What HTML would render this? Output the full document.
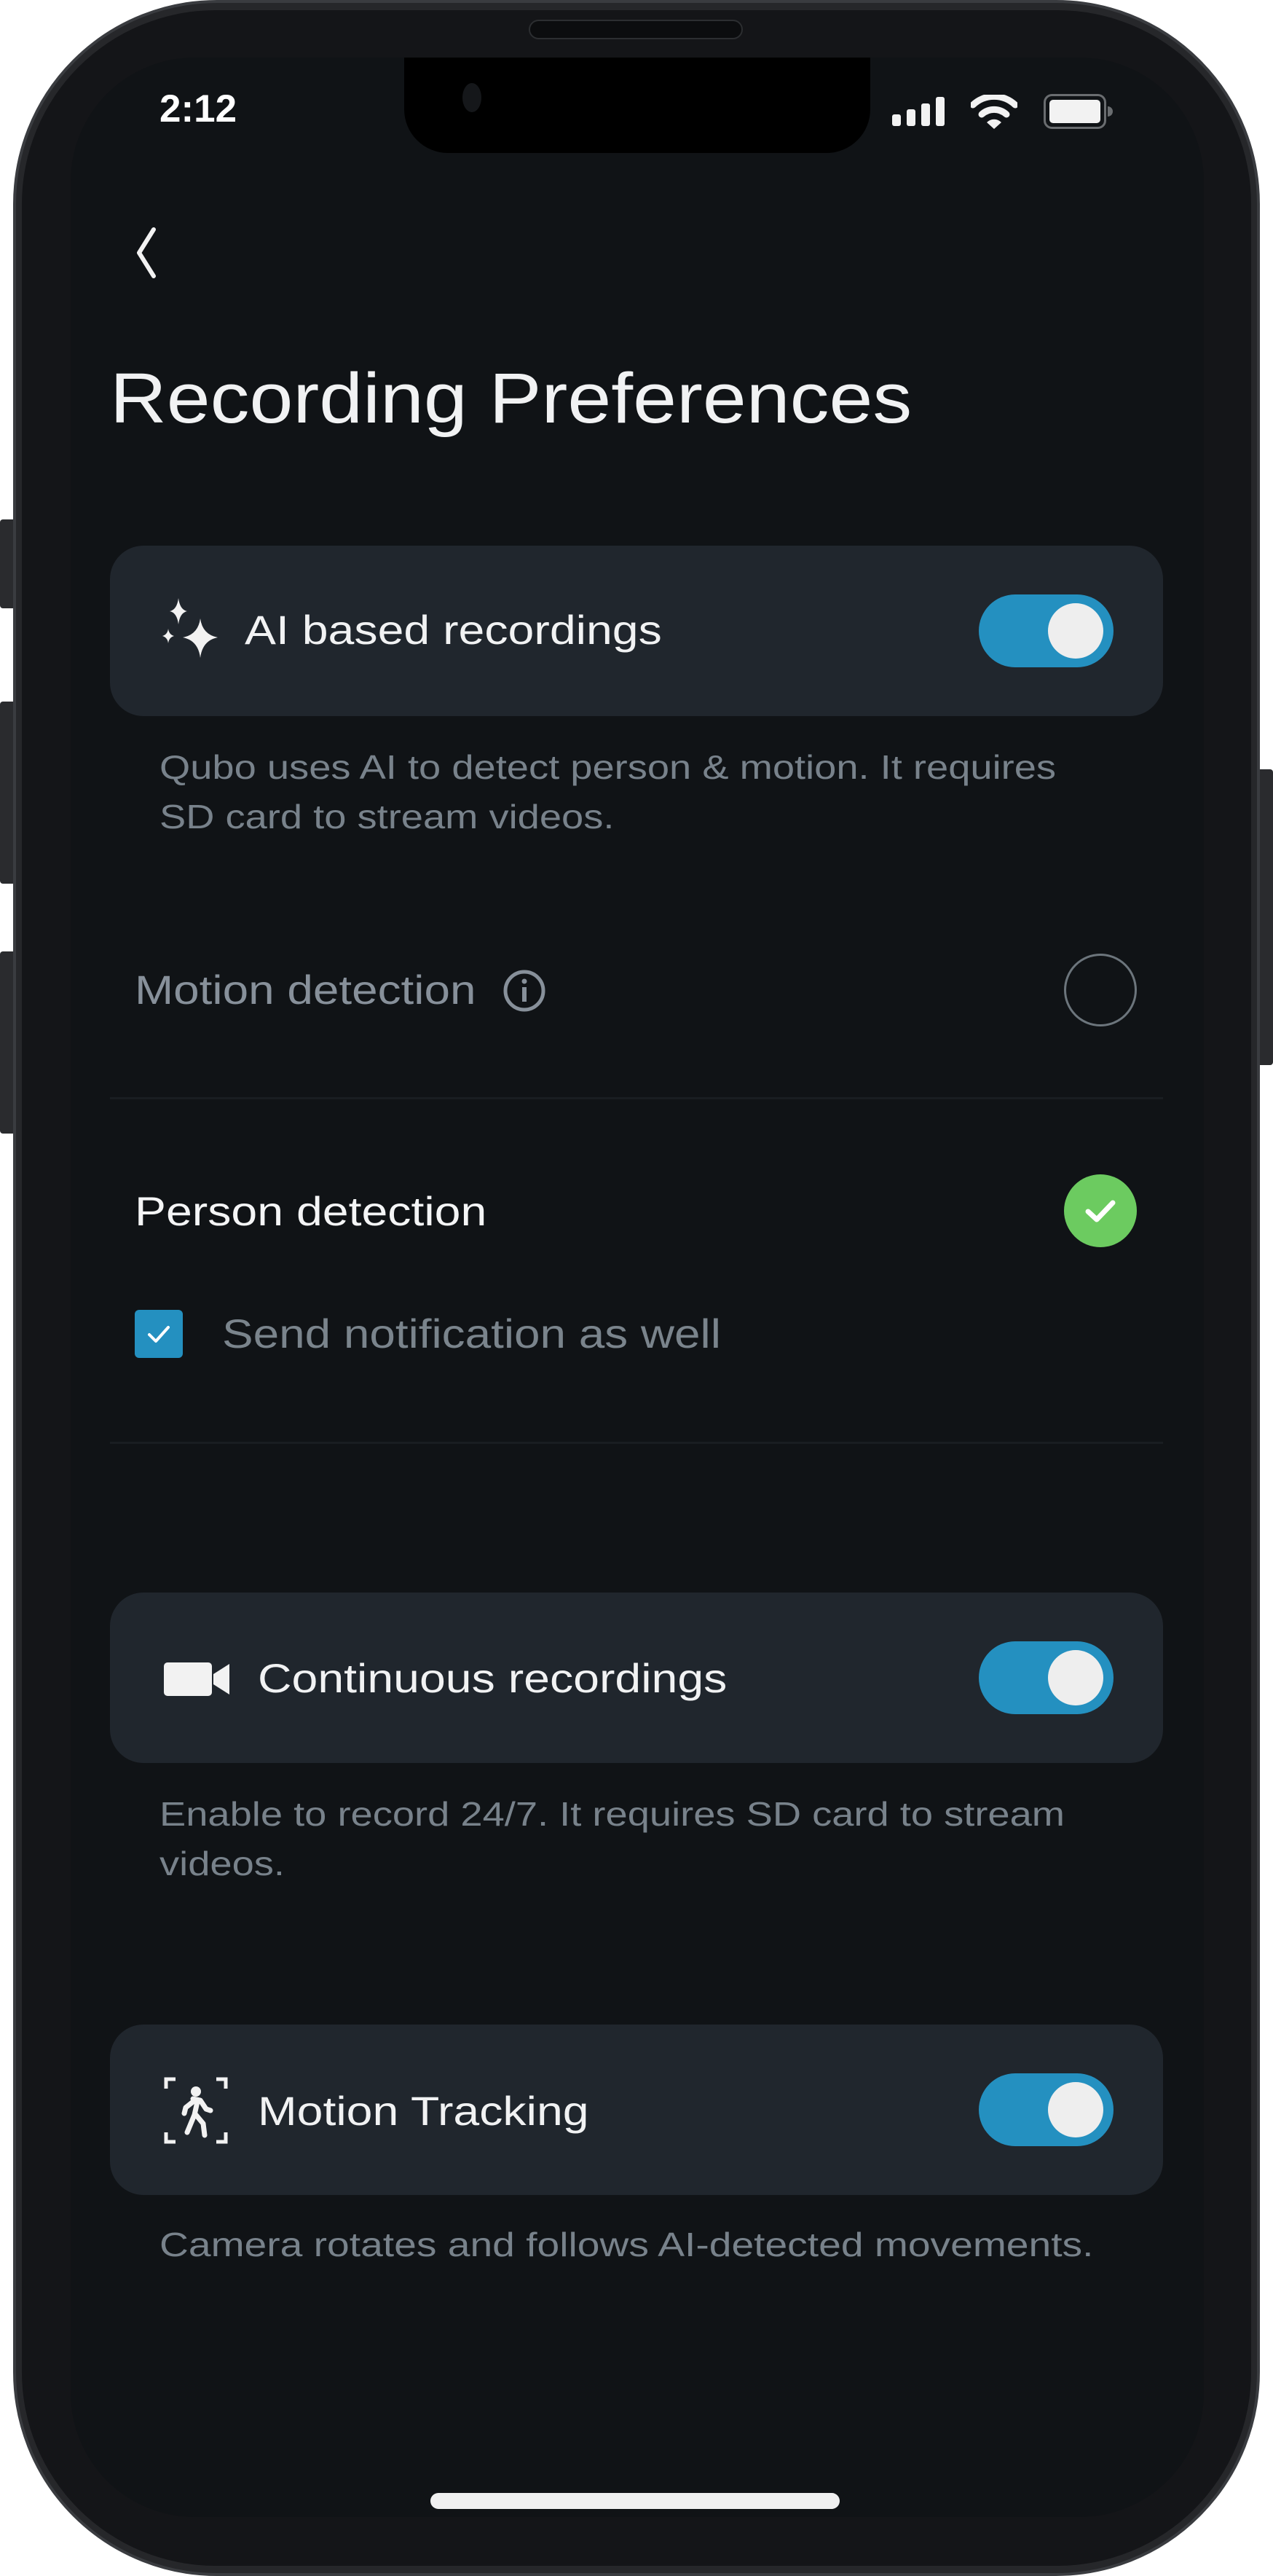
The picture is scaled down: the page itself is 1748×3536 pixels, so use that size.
<!DOCTYPE html>
<html><head><meta charset="utf-8"><style>
*{margin:0;padding:0;box-sizing:border-box}
html,body{width:1748px;height:3536px;background:#fff;overflow:hidden;font-family:"Liberation Sans",sans-serif}
.abs{position:absolute}
.phone{left:18px;top:0;width:1712px;height:3536px;border-radius:280px;background:#26272a;border:4px solid #3a3c40}
.bezel{left:30px;top:14px;width:1688px;height:3508px;border-radius:266px;background:#141518}
.screen{left:97px;top:79px;width:1556px;height:3376px;border-radius:170px;background:#101316;overflow:hidden}
.card{position:absolute;left:54px;width:1446px;height:234px;border-radius:46px;background:#20262d}
.tog{position:absolute;left:1193px;width:185px;height:100px;border-radius:50px;background:#2490c0}
.tog::after{content:"";position:absolute;right:14px;top:12px;width:76px;height:76px;border-radius:50%;background:#eeeeee}
.sx{transform-origin:0 0;white-space:nowrap}
.ct{position:absolute;color:#f1f2f3;font-size:56px;transform:scaleX(1.15)}
.desc{position:absolute;left:122px;color:#78828b;font-size:46px;line-height:68px;transform:scaleX(1.18)}
.side{background:#2a2b2e;position:absolute}
</style></head><body>
<div class="side" style="left:0;top:713px;width:20px;height:122px;border-radius:4px 0 0 4px"></div>
<div class="side" style="left:0;top:963px;width:20px;height:250px;border-radius:4px 0 0 4px"></div>
<div class="side" style="left:0;top:1306px;width:20px;height:250px;border-radius:4px 0 0 4px"></div>
<div class="side" style="left:1728px;top:1056px;width:20px;height:406px;border-radius:0 4px 4px 0"></div>
<div class="abs phone"></div>
<div class="abs bezel"></div>
<div class="abs" style="left:726px;top:27px;width:294px;height:27px;border-radius:14px;background:#0c0d0f;border:2px solid #2c2e31"></div>
<div class="abs screen">
  <div class="abs" style="left:458px;top:-10px;width:640px;height:141px;background:#000;border-radius:0 0 60px 60px"></div>
  <div class="abs" style="left:538px;top:35px;width:26px;height:40px;border-radius:50%;background:#15171a"></div>
  <div class="abs" style="left:122px;top:40px;color:#fff;font-size:53px;font-weight:bold">2:12</div>
  <svg class="abs" style="left:1128px;top:54px" width="74" height="42" viewBox="0 0 74 42">
    <rect x="0" y="24" width="12" height="16" rx="3" fill="#f2f2f2"/><rect x="20" y="17" width="12" height="23" rx="3" fill="#f2f2f2"/><rect x="40" y="9" width="12" height="31" rx="3" fill="#f2f2f2"/><rect x="60" y="0" width="12" height="40" rx="3" fill="#f2f2f2"/>
  </svg>
  <svg class="abs" style="left:1236px;top:51px" width="64" height="48" viewBox="0 0 64 48">
    <path d="M3 14 A42 42 0 0 1 61 14" stroke="#f2f2f2" stroke-width="9" fill="none" stroke-linecap="round"/>
    <path d="M15 27 A25 25 0 0 1 49 27" stroke="#f2f2f2" stroke-width="9" fill="none" stroke-linecap="round"/>
    <path d="M22 38 L32 47 L42 38 A14 14 0 0 0 22 38Z" fill="#f2f2f2"/>
  </svg>
  <svg class="abs" style="left:1336px;top:50px" width="100" height="50" viewBox="0 0 100 50">
    <rect x="1.5" y="1.5" width="83" height="45" rx="10" fill="none" stroke="#6a6d70" stroke-width="3"/>
    <rect x="8" y="8" width="70" height="32" rx="5" fill="#f2f2f2"/>
    <path d="M88 17 A7 7 0 0 1 88 31Z" fill="#6a6d70"/>
  </svg>
  <svg class="abs" style="left:84px;top:230px" width="48" height="76" viewBox="0 0 48 76">
    <path d="M30 6 L10 38 L30 70" stroke="#f2f2f2" stroke-width="6" fill="none" stroke-linecap="round" stroke-linejoin="round"/>
  </svg>
  <div class="abs sx" style="left:54px;top:412px;color:#f1f2f3;font-size:97px;transform:scaleX(1.11)">Recording Preferences</div>

  <div class="card" style="top:670px">
    <svg class="abs" style="left:68px;top:70px" width="84" height="90" viewBox="0 0 84 90">
      <path d="M26 2 Q28 18 38 20 Q28 22 26 38 Q24 22 14 20 Q24 18 26 2Z" fill="#f2f2f2"/>
      <path d="M56 30 Q59 52 80 56 Q59 60 56 84 Q53 60 32 56 Q53 52 56 30Z" fill="#f2f2f2"/>
      <path d="M12 44 Q13 52 20 54 Q13 56 12 64 Q11 56 4 54 Q11 52 12 44Z" fill="#f2f2f2"/>
    </svg>
    <div class="ct sx" style="left:185px;top:83px">AI based recordings</div>
    <div class="tog" style="top:67px"></div>
  </div>
  <div class="desc sx" style="top:940px">Qubo uses AI to detect person &amp; motion. It requires<br>SD card to stream videos.</div>

  <div class="abs sx" style="left:88px;top:1247px;color:#87909a;font-size:56px;transform:scaleX(1.14)">Motion detection</div>
  <svg class="abs" style="left:593px;top:1251px" width="60" height="60" viewBox="0 0 60 60">
    <circle cx="30" cy="30" r="26" stroke="#87909a" stroke-width="5" fill="none"/>
    <rect x="27" y="25" width="6" height="20" fill="#87909a"/><circle cx="30" cy="17" r="3.5" fill="#87909a"/>
  </svg>
  <div class="abs" style="left:1364px;top:1230px;width:100px;height:100px;border-radius:50%;border:3px solid #6c757c"></div>
  <div class="abs" style="left:54px;top:1427px;width:1446px;height:3px;background:#191d21"></div>

  <div class="abs sx" style="left:88px;top:1551px;color:#f4f5f6;font-size:56px;transform:scaleX(1.15)">Person detection</div>
  <div class="abs" style="left:1364px;top:1533px;width:100px;height:100px;border-radius:50%;background:#6ccb60"></div>
  <svg class="abs" style="left:1364px;top:1533px" width="100" height="100" viewBox="0 0 100 100"><path d="M33 51 L45 62 L67 39" stroke="#fff" stroke-width="7" fill="none" stroke-linecap="round" stroke-linejoin="round"/></svg>
  <div class="abs" style="left:88px;top:1719px;width:66px;height:66px;border-radius:6px;background:#2490c0"></div>
  <svg class="abs" style="left:88px;top:1719px" width="66" height="66" viewBox="0 0 66 66"><path d="M20 34 L29 43 L46 24" stroke="#fff" stroke-width="4" fill="none" stroke-linecap="round" stroke-linejoin="round"/></svg>
  <div class="abs sx" style="left:208px;top:1719px;color:#7a848c;font-size:56px;transform:scaleX(1.14)">Send notification as well</div>
  <div class="abs" style="left:54px;top:1900px;width:1446px;height:3px;background:#191d21"></div>

  <div class="card" style="top:2107px">
    <svg class="abs" style="left:74px;top:94px" width="92" height="50" viewBox="0 0 92 50">
      <rect x="0" y="2" width="66" height="46" rx="5" fill="#f2f2f2"/><path d="M68 18 L90 4 L90 46 L68 32Z" fill="#f2f2f2"/>
    </svg>
    <div class="ct sx" style="left:203px;top:85px">Continuous recordings</div>
    <div class="tog" style="top:67px"></div>
  </div>
  <div class="desc sx" style="top:2377px">Enable to record 24/7. It requires SD card to stream<br>videos.</div>

  <div class="card" style="top:2700px">
    <svg class="abs" style="left:74px;top:72px" width="88" height="92" viewBox="0 0 88 92">
      <path d="M3 16 V3 H16 M72 3 H85 V16 M85 76 V89 H72 M16 89 H3 V76" stroke="#f2f2f2" stroke-width="5" fill="none"/>
      <circle cx="44" cy="20" r="7" fill="#f2f2f2"/>
      <path d="M40 30 L50 32 L58 44 L64 46 M46 34 L42 52 L32 76 M44 52 L54 64 L56 80 M40 34 L30 42 L28 50" stroke="#f2f2f2" stroke-width="7" fill="none" stroke-linecap="round" stroke-linejoin="round"/>
    </svg>
    <div class="ct sx" style="left:203px;top:86px">Motion Tracking</div>
    <div class="tog" style="top:67px"></div>
  </div>
  <div class="desc sx" style="top:2968px;transform:scaleX(1.2)">Camera rotates and follows AI-detected movements.</div>

  <div class="abs" style="left:494px;top:3343px;width:562px;height:22px;border-radius:11px;background:#f0f0f0"></div>
</div>
</body></html>
